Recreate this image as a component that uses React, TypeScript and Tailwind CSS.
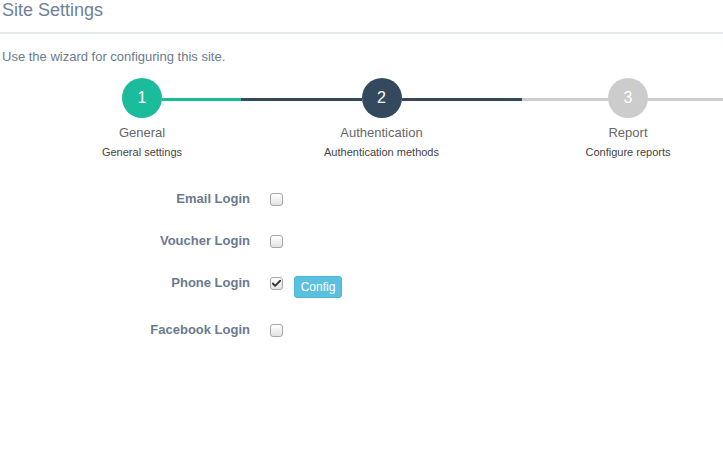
import { Check } from "lucide-react";

type Step = {
  num: number;
  title: string;
  sub: string;
  width: string;
  left: string;
  right: string;
  circle: string;
};

const STEPS: Step[] = [
  {
    num: 1,
    title: "General",
    sub: "General settings",
    width: "w-[198px]",
    left: "bg-transparent",
    right: "bg-[#1abc9c]",
    circle: "bg-[#1abc9c]",
  },
  {
    num: 2,
    title: "Authentication",
    sub: "Authentication methods",
    width: "w-[281px]",
    left: "bg-[#34495e]",
    right: "bg-[#34495e]",
    circle: "bg-[#34495e]",
  },
  {
    num: 3,
    title: "Report",
    sub: "Configure reports",
    width: "w-[212px]",
    left: "bg-[#cccccc]",
    right: "bg-[#cccccc]",
    circle: "bg-[#cccccc]",
  },
];

const LOGINS = [
  { label: "Email Login", checked: false },
  { label: "Voucher Login", checked: false },
  { label: "Phone Login", checked: true, config: true },
  { label: "Facebook Login", checked: false },
];

function Checkbox({ checked }: { checked: boolean }) {
  return (
    <span className="flex h-[13px] w-[13px] items-center justify-center rounded-[3px] border border-[#a6a6a6] bg-gradient-to-b from-white to-[#e3e3e3]">
      {checked && <Check className="h-[11px] w-[11px] text-[#333]" strokeWidth={4} />}
    </span>
  );
}

export default function App() {
  return (
    <div className="h-[449px] w-[723px] overflow-hidden bg-white font-['Liberation_Sans',Arial,sans-serif]">
      <div className="border-b-2 border-[#e6e9ec] pb-[12px]">
        <h1 className="pl-[2px] text-[18px] leading-[20px] font-normal text-[#6f819b]">Site Settings</h1>
      </div>

      <p className="mt-[14px] pl-[2px] text-[13px] leading-[18px] text-[#6b7b90]">
        Use the wizard for configuring this site.
      </p>

      <div className="mt-[12px] flex pl-[43px]">
        {STEPS.map((s) => (
          <div key={s.num} className={`flex shrink-0 flex-col items-center ${s.width}`}>
            <div className="flex w-full items-center">
              <div className={`mt-[3px] h-[3px] flex-1 ${s.left}`} />
              <div
                className={`flex h-[40px] w-[40px] shrink-0 items-center justify-center rounded-full text-[16px] text-white ${s.circle}`}
              >
                {s.num}
              </div>
              <div className={`mt-[3px] h-[3px] flex-1 ${s.right}`} />
            </div>
            <div className="mt-[6px] text-[13px] leading-[18px] text-[#666]">{s.title}</div>
            <div className="mt-[3px] text-[11px] leading-[15px] text-[#444]">{s.sub}</div>
          </div>
        ))}
      </div>

      <div className="mt-[18px] flex flex-col">
        {LOGINS.map((l) => (
          <div key={l.label} className={`flex items-center ${l.config ? "h-[47px] pb-[5px]" : "h-[42px]"}`}>
            <label className="w-[250px] text-right text-[13px] leading-[18px] font-bold text-[#6b7a90]">
              {l.label}
            </label>
            <div className="ml-[20px]">
              <Checkbox checked={l.checked} />
            </div>
            {l.config && (
              <button className="mt-[8px] ml-[11px] h-[22px] w-[48px] rounded-[3px] border border-[#46b8da] bg-[#5bc0de] text-[12px] leading-[20px] text-white">
                Config
              </button>
            )}
          </div>
        ))}
      </div>
    </div>
  );
}
